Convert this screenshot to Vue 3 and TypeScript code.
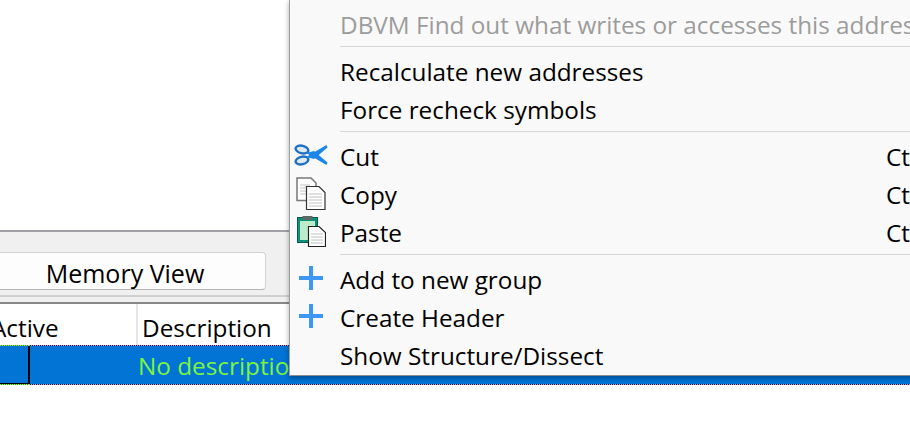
<script setup lang="ts">
interface Item { label: string; shortcut?: string; icon?: string; disabled?: boolean; sep?: boolean }
const items: Item[] = [
  { label: 'DBVM Find out what writes or accesses this address', disabled: true },
  { sep: true, label: '' },
  { label: 'Recalculate new addresses' },
  { label: 'Force recheck symbols' },
  { sep: true, label: '' },
  { label: 'Cut', shortcut: 'Ctrl+X', icon: 'cut' },
  { label: 'Copy', shortcut: 'Ctrl+C', icon: 'copy' },
  { label: 'Paste', shortcut: 'Ctrl+V', icon: 'paste' },
  { sep: true, label: '' },
  { label: 'Add to new group', icon: 'plus' },
  { label: 'Create Header', icon: 'plus' },
  { label: 'Show Structure/Dissect' },
]
</script>

<template>
  <div class="page">
    <div class="blank"></div>
    <div class="panel">
      <div class="panel-inner">
        <button class="btn">Memory View</button>
      </div>
    </div>
    <div class="table">
      <div class="head">
        <div class="col active">Active</div>
        <div class="col desc">Description</div>
      </div>
      <div class="row">
        <div class="dots"><div class="dots-green"></div></div>
        <div class="rowbody">
          <div class="cell-active"></div>
          <div class="cell-desc">No description</div>
        </div>
        <div class="dots"><div class="dots-green"></div></div>
      </div>
    </div>

    <div class="menu">
      <template v-for="(it, i) in items" :key="i">
        <div v-if="it.sep" class="sep"><i></i></div>
        <div v-else class="item" :class="{ off: it.disabled }">
          <span class="ico">
            <svg v-if="it.icon === 'cut'" width="34" height="26" viewBox="0 0 34 26">
              <ellipse cx="8" cy="7.5" rx="6.5" ry="3.8" transform="rotate(14 8 7.5)" fill="#dce9f6" stroke="#1f6fc0" stroke-width="2.4"/>
              <ellipse cx="8" cy="18.5" rx="6.5" ry="3.8" transform="rotate(-14 8 18.5)" fill="#dce9f6" stroke="#1f6fc0" stroke-width="2.4"/>
              <path d="M12 15 L32.5 3 L33.5 5.5 L20 17Z" fill="#1e86e6"/>
              <path d="M12 11 L32.5 23 L33.5 20.5 L20 9Z" fill="#1e86e6"/>
            </svg>
            <svg v-else-if="it.icon === 'copy'" width="30" height="33" viewBox="0 0 30 33">
              <path d="M1 1H15L20 6V23.5H1Z" fill="#fff" stroke="#777" stroke-width="1.5"/>
              <path d="M4 8h10M4 11h6M4 14h6M4 17h6" stroke="#c4c4c4" stroke-width="1"/>
              <path d="M10.5 9.5H23L29 15.5V32.5H10.5Z" fill="#fff" stroke="#333" stroke-width="1.2"/>
              <path d="M13 17h13M13 20h13M13 23h13M13 26h13M13 29h13" stroke="#c0c0c0" stroke-width="1"/>
            </svg>
            <svg v-else-if="it.icon === 'paste'" width="29" height="31" viewBox="0 0 29 31">
              <rect x="0.5" y="1.5" width="20" height="25" fill="#0d8f79" stroke="#0b5c50"/>
              <rect x="3" y="5" width="15" height="19" fill="#bcecc9"/>
              <rect x="5.5" y="0" width="10" height="4" fill="#5d6b68"/>
              <path d="M11.5 10.5H22L28.5 16.5V30.5H11.5Z" fill="#fff" stroke="#222" stroke-width="1.2"/>
              <path d="M14 18h12M14 21h12M14 24h12M14 27h12" stroke="#c0c0c0" stroke-width="1"/>
            </svg>
            <svg v-else-if="it.icon === 'plus'" width="24" height="24" viewBox="0 0 24 24">
              <path d="M0 12H24M12 0V24" stroke="#3d97f5" stroke-width="4"/>
            </svg>
          </span>
          <span class="label">{{ it.label }}</span>
          <span v-if="it.shortcut" class="short">{{ it.shortcut }}</span>
        </div>
      </template>
    </div>
  </div>
</template>

<style>
html, body { margin: 0; background: #fff; }
</style>

<style scoped>
.page {
  position: relative;
  width: 910px;
  height: 431px;
  overflow: hidden;
  background: #fff;
  font-family: "Open Sans", "Noto Sans", sans-serif;
  font-size: 24.3px;
  color: #000;
}
.blank { box-sizing: border-box; height: 232px; border-bottom: 2px solid #a0a0a8; }
.panel { height: 70px; background: #f0f0f0; }
.panel-inner {
  height: 65px;
  box-sizing: border-box;
  padding-top: 20px;
  border-bottom: 2px solid #d0d0d0;
}
.btn {
  display: block;
  width: 282px;
  height: 38px;
  margin-left: -16px;
  box-sizing: border-box;
  background: #fdfdfd;
  border: 1px solid #d2d2d2;
  border-bottom-color: #b4b4b4;
  border-radius: 4px;
  font: inherit;
  font-size: 25px;
  color: inherit;
  padding: 3px 0 0 0;
}
.table { border-top: 2px solid #888; }
.head { display: flex; height: 41px; }
.col { line-height: 48px; height: 41px; white-space: nowrap; }
.active { box-sizing: border-box; border-right: 2px solid #e6e6e6; margin-left: -9px; flex: none; width: 147px; }
.desc { padding-left: 4px; }
.row { height: 40px; }
.dots {
  height: 1px;
  background: repeating-linear-gradient(90deg, #221133 0 1px, #b8a0e0 1px 2px);
}
.dots-green {
  width: 29px;
  height: 1px;
  background: repeating-linear-gradient(90deg, #9cf53b 0 1px, #3f8a4a 1px 2px);
}
.rowbody { display: flex; height: 38px; background: #0174d6; }
.cell-active {
  width: 30px;
  height: 38px;
  box-sizing: border-box;
  border-right: 2px solid #000;
  border-bottom: 1px solid #000;
  flex: none;
}
.cell-desc { margin-left: 108px; color: #7cf53b; line-height: 40px; white-space: nowrap; }
.menu {
  position: absolute;
  left: 289px;
  top: 0;
  width: 640px;
  height: 376px;
  box-sizing: border-box;
  padding-top: 6px;
  background: #f9f9f9;
  border-left: 1px solid #a0a0a0;
  border-bottom: 1px solid #8c8c8c;
  box-shadow: 0 2px 5px rgba(0, 0, 0, .35);
}
.item {
  display: flex;
  align-items: center;
  height: 38px;
  box-sizing: border-box;
  padding-bottom: 2px;
  white-space: nowrap;
  position: relative;
}
.off { color: #9c9c9c; }
.ico {
  width: 50px;
  flex: none;
  box-sizing: border-box;
  padding: 0 8px 2px 0;
  display: flex;
  align-items: center;
  justify-content: center;
  height: 36px;
}
.label { flex: none; }
.short { position: absolute; left: 596px; }
.sep { height: 9px; padding: 2px 0 0 50px; box-sizing: border-box; }
.sep i { display: block; height: 1px; background: #d8d8d8; }
</style>
